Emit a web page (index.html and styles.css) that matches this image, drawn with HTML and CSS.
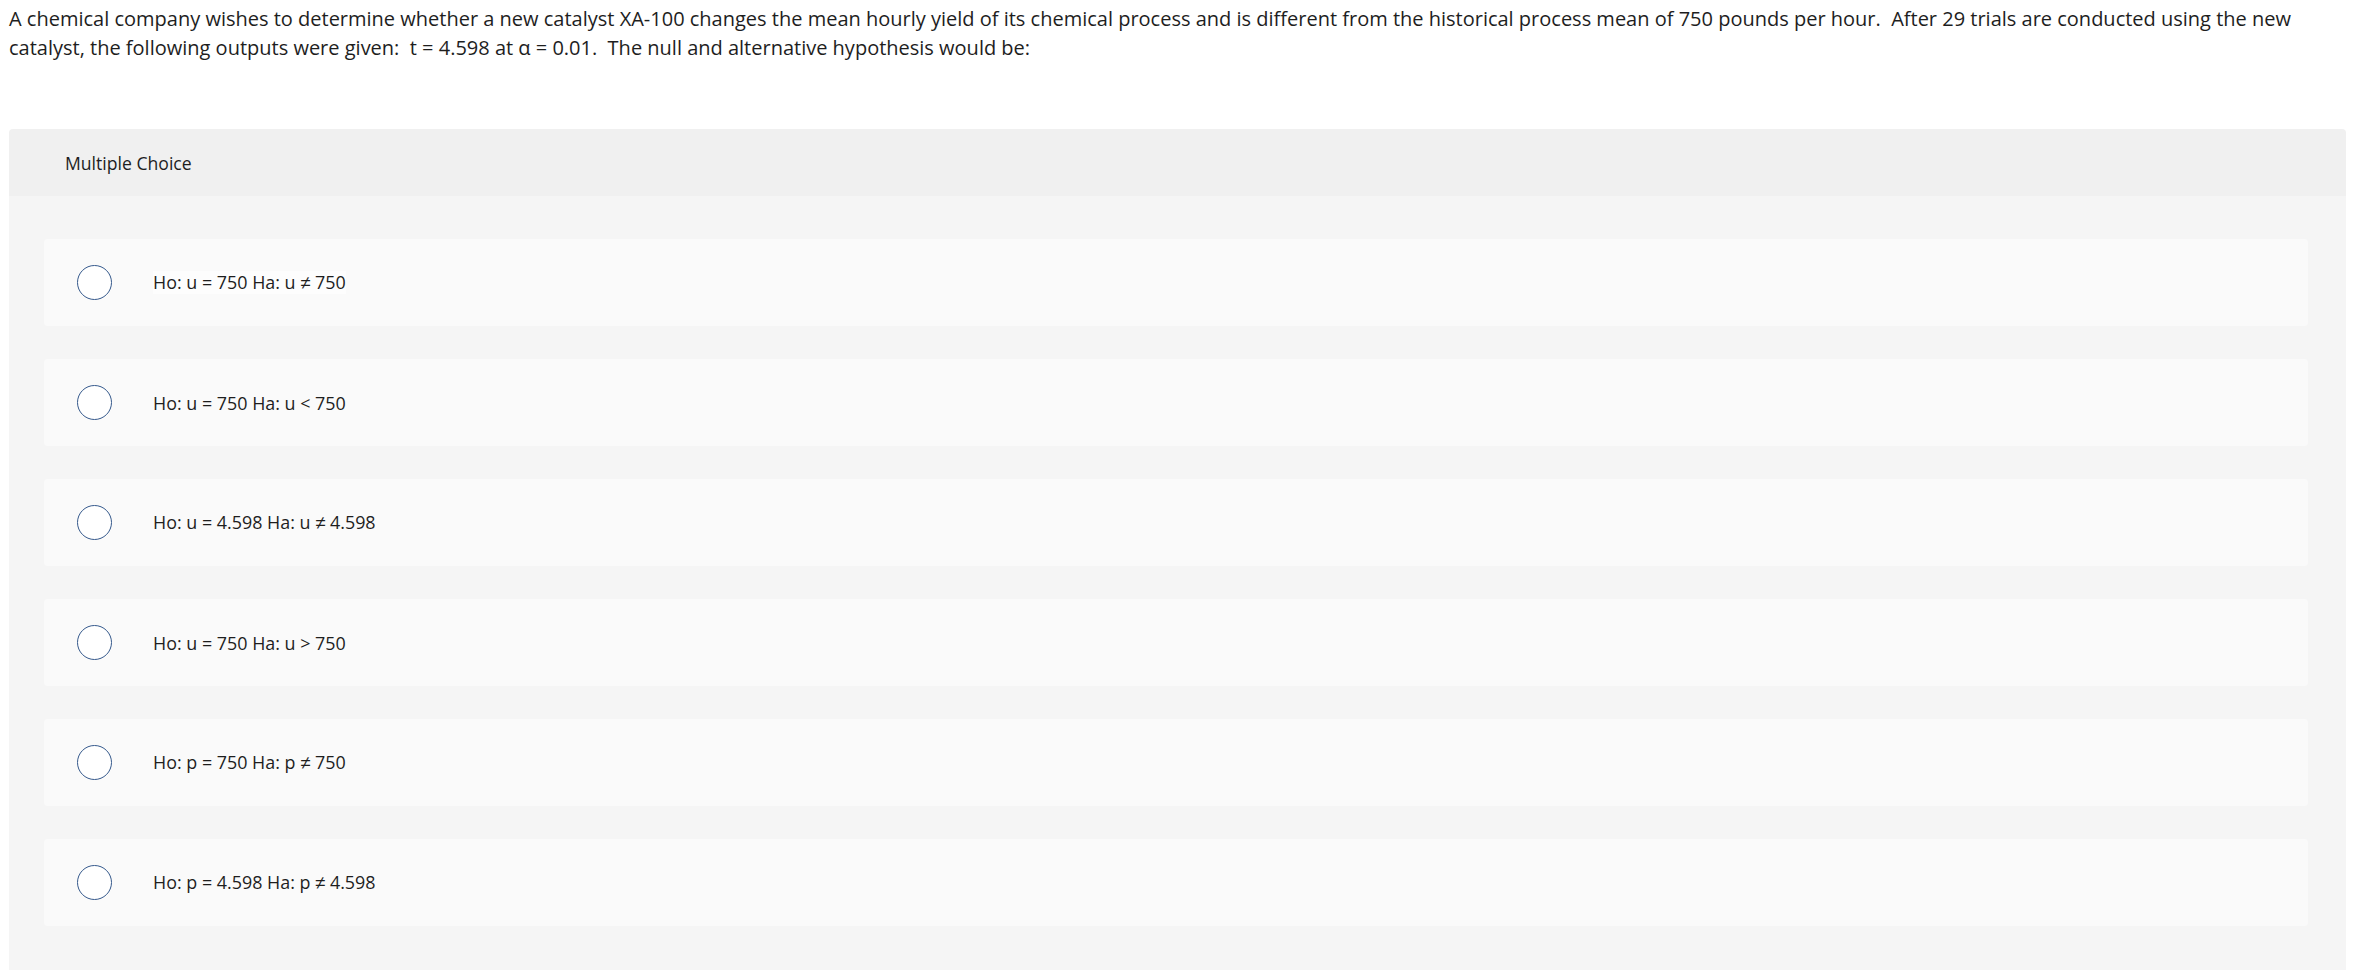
FILE: index.html
```html
<!DOCTYPE html>
<html>
<head>
<meta charset="utf-8">
<link rel="stylesheet" href="styles.css">
</head>
<body>
<p class="question">A chemical company wishes to determine whether a new catalyst XA-100 changes the mean hourly yield of its chemical process and is different from the historical process mean of 750 pounds per hour.&nbsp; After 29 trials are conducted using the new catalyst, the following outputs were given:&nbsp; t = 4.598 at α = 0.01.&nbsp; The null and alternative hypothesis would be:</p>
<section class="panel">
  <div class="panel-head">Multiple Choice</div>
  <div class="panel-body">
    <label class="option"><span class="radio"></span><span class="label label-hl">Ho: u = 750 Ha: u <span class="ne">≠</span> 750</span></label>
    <label class="option"><span class="radio"></span><span class="label">Ho: u = 750 Ha: u &lt; 750</span></label>
    <label class="option"><span class="radio"></span><span class="label">Ho: u = 4.598 Ha: u <span class="ne">≠</span> 4.598</span></label>
    <label class="option"><span class="radio"></span><span class="label">Ho: u = 750 Ha: u &gt; 750</span></label>
    <label class="option"><span class="radio"></span><span class="label">Ho: p = 750 Ha: p <span class="ne">≠</span> 750</span></label>
    <label class="option"><span class="radio"></span><span class="label">Ho: p = 4.598 Ha: p <span class="ne">≠</span> 4.598</span></label>
  </div>
</section>
</body>
</html>
```
FILE: styles.css
```css
html, body {
  margin: 0;
  padding: 0;
  background: #ffffff;
}
body {
  font-family: "Open Sans", "Liberation Sans", sans-serif;
  color: #1e1e1e;
  overflow: hidden;
}
.question {
  margin: 0;
  padding: 5px 16px 0 9px;
  font-size: 20px;
  line-height: 28.5px;
}
.panel {
  margin: 67px 26px 0 9px;
  border-radius: 4px 4px 0 0;
  overflow: hidden;
}
.panel-head {
  height: 67px;
  display: flex;
  align-items: center;
  padding-left: 56px;
  background: #f0f0f0;
  font-size: 17.6px;
  color: #1e1e1e;
}
.panel-body {
  background: #f5f5f5;
  padding: 43px 38px 60px 35px;
  display: flex;
  flex-direction: column;
  gap: 33px;
}
.option {
  height: 87px;
  display: flex;
  align-items: center;
  padding-left: 33px;
  background: #fafafa;
  border-radius: 4px;
}
.radio {
  width: 33px;
  height: 33px;
  border: 1.4px solid #35598c;
  border-radius: 50%;
  background: #ffffff;
  flex: none;
}
.label {
  margin-left: 41px;
  font-size: 17.9px;
  line-height: 22px;
  color: #1e1e1e;
}
.label-hl {
  background: #fdfdfd;
}
.ne {
  font-family: "Liberation Sans", sans-serif;
  font-size: 18.5px;
}
```
